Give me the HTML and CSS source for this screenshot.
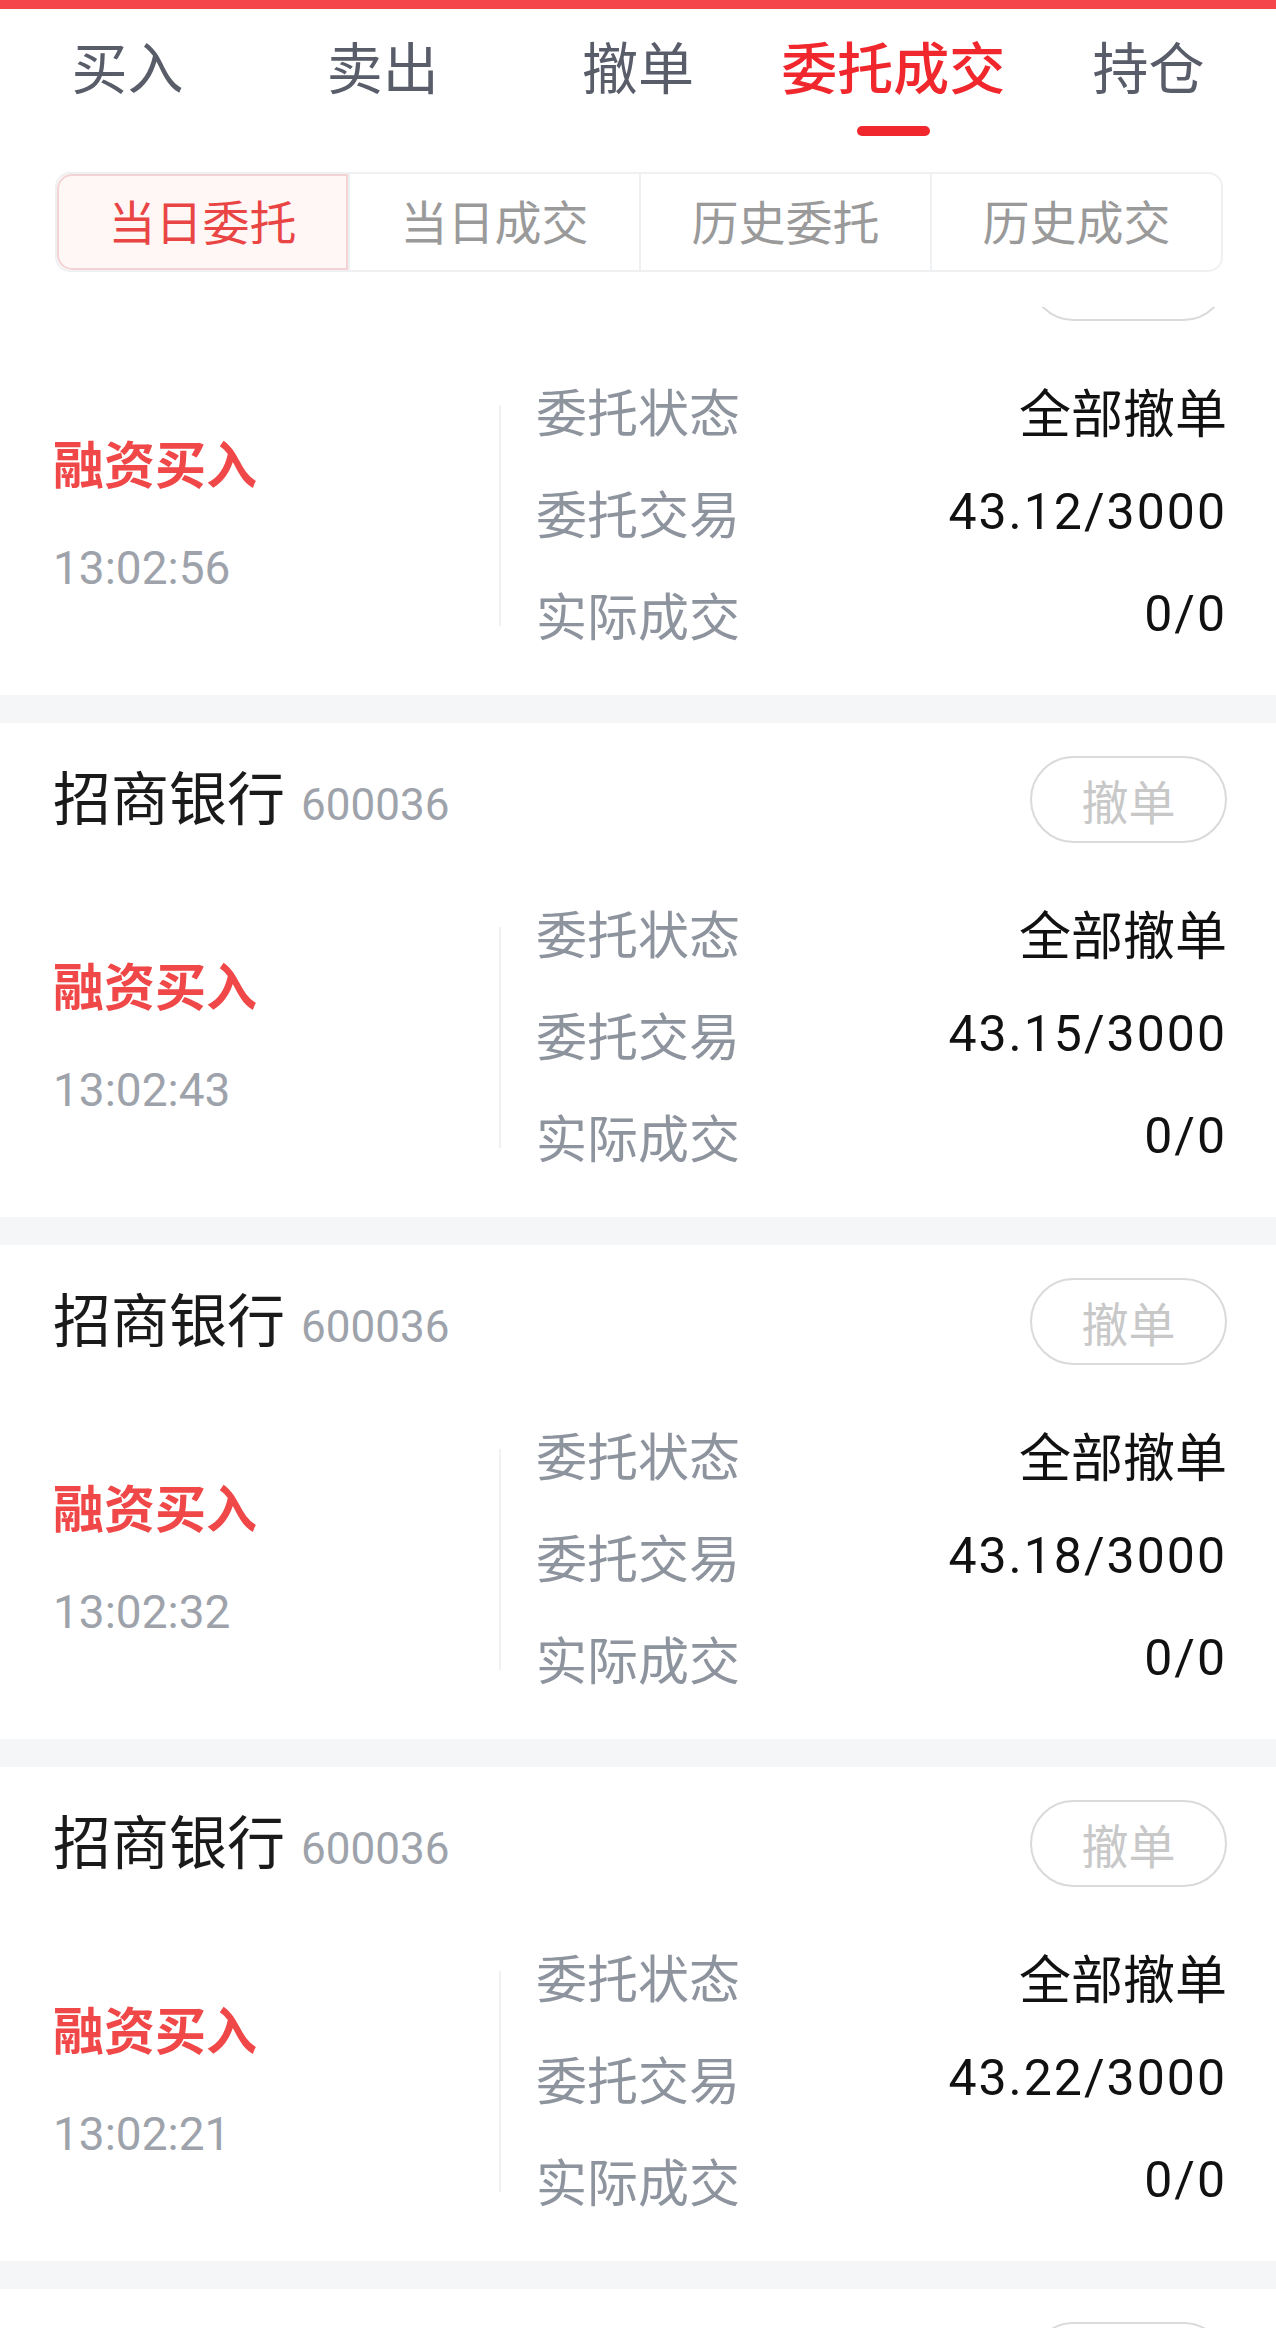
FILE: index.html
```html
<!DOCTYPE html>
<html lang="zh-CN">
<head>
  <meta charset="UTF-8">
  <meta name="viewport" content="width=device-width, initial-scale=1.0">
  <title>委托成交</title>
  <link rel="stylesheet" href="styles.css">
</head>
<body>
  <header class="top">
    <div class="top-bar"></div>
    <nav class="tabs">
      <div class="tab"><span>买入</span></div>
      <div class="tab"><span>卖出</span></div>
      <div class="tab"><span>撤单</span></div>
      <div class="tab active"><span>委托成交</span><i class="tab-line"></i></div>
      <div class="tab"><span>持仓</span></div>
    </nav>
    <div class="sub-tabs">
      <div class="sub-tab active">当日委托</div>
      <div class="sub-tab">当日成交</div>
      <div class="sub-tab">历史委托</div>
      <div class="sub-tab">历史成交</div>
    </div>
  </header>

  <div class="list">
    <div class="list-inner" id="orderList"></div>
  </div>

  <script>
    const orders = [
      { price: '43.12', time: '13:02:56' },
      { price: '43.15', time: '13:02:43' },
      { price: '43.18', time: '13:02:32' },
      { price: '43.22', time: '13:02:21' },
      { price: '43.25', time: '13:02:10' }
    ];

    const orderList = document.getElementById('orderList');

    function createCard(order) {
      const card = document.createElement('div');
      card.className = 'card';
      card.innerHTML = `
        <div class="card-head">
          <div class="stock"><span class="stock-name">招商银行</span><span class="stock-code">600036</span></div>
          <button class="cancel-btn">撤单</button>
        </div>
        <div class="card-body">
          <div class="side">
            <div class="side-type">融资买入</div>
            <div class="side-time">${order.time}</div>
          </div>
          <div class="divider"></div>
          <div class="detail">
            <div class="row"><span class="label">委托状态</span><span class="value">全部撤单</span></div>
            <div class="row"><span class="label">委托交易</span><span class="value num">${order.price}/3000</span></div>
            <div class="row"><span class="label">实际成交</span><span class="value num">0/0</span></div>
          </div>
        </div>`;
      return card;
    }

    orders.forEach(order => orderList.appendChild(createCard(order)));
  </script>
</body>
</html>
```

FILE: styles.css
```css
* {
  box-sizing: border-box;
}

body {
  margin: 0;
  padding: 0;
  background-color: #ffffff;
  font-family: "Noto Sans CJK SC", "Noto Sans", sans-serif;
  color: #1a1a1a;
}

.top {
  height: 307px;
  background-color: #ffffff;
}

.top-bar {
  height: 9px;
  background-color: #f5474b;
}

.tabs {
  display: grid;
  grid-template-columns: repeat(5, 1fr);
  padding-top: 18px;
}

.tab {
  display: flex;
  flex-direction: column;
  align-items: center;
  font-size: 56px;
  line-height: 76px;
  color: #585d69;
}

.tab.active {
  color: #f0282d;
  font-weight: 500;
}

.tab-line {
  display: block;
  width: 73px;
  height: 10px;
  margin-top: 23px;
  border-radius: 5px;
  background-color: #f0282d;
}

.sub-tabs {
  display: grid;
  grid-template-columns: repeat(4, 1fr);
  height: 100px;
  margin: 36px 53px 0 55px;
  border: 2px solid #eef0f2;
  border-radius: 15px;
  overflow: hidden;
}

.sub-tab {
  display: flex;
  align-items: center;
  justify-content: center;
  padding-bottom: 6px;
  font-size: 47px;
  color: #9a9a9a;
  border-left: 2px solid #eef0f2;
}

.sub-tab:first-child {
  border-left: none;
}

.sub-tab.active {
  color: #e94545;
  background-color: #fff6f6;
  box-shadow: inset 0 0 0 2px #f3d3d3;
  border-radius: 15px 0 0 15px;
}

.list {
  height: 2021px;
  overflow: hidden;
}

.list-inner {
  margin-top: -106px;
}

.card {
  padding: 33px 49px 27px 53px;
  border-bottom: 28px solid #f5f6f8;
}

.card-head {
  display: flex;
  align-items: center;
  justify-content: space-between;
  height: 87px;
}

.stock {
  display: flex;
  align-items: baseline;
  padding-bottom: 10px;
}

.stock-name {
  font-size: 58px;
  color: #1a1a1a;
}

.stock-code {
  margin-left: 16px;
  font-family: "Roboto", "Noto Sans", sans-serif;
  font-size: 44px;
  color: #9ea3ab;
}

.cancel-btn {
  width: 197px;
  height: 87px;
  padding: 0;
  border: 2px solid #dadada;
  border-radius: 44px;
  background-color: #ffffff;
  font-family: "Noto Sans CJK SC", sans-serif;
  font-size: 47px;
  color: #c8c8c8;
}

.card-body {
  display: flex;
  align-items: center;
  margin-top: 41px;
}

.side {
  width: 446px;
}

.side-type {
  font-size: 51px;
  line-height: 70px;
  font-weight: 700;
  color: #f04848;
}

.side-time {
  margin-top: 36px;
  font-family: "Roboto", "Noto Sans", sans-serif;
  font-size: 46px;
  line-height: 70px;
  color: #9ea3ab;
}

.divider {
  width: 2px;
  height: 221px;
  background-color: #f0f1f3;
}

.detail {
  flex: 1;
  padding-left: 35px;
}

.row {
  display: flex;
  align-items: center;
  justify-content: space-between;
  height: 102px;
  padding-bottom: 6px;
}

.label {
  font-size: 51px;
  color: #8e949e;
}

.value {
  font-size: 52px;
  color: #111111;
}

.value.num {
  font-family: "Roboto", "Noto Sans", sans-serif;
  font-size: 50px;
  letter-spacing: 2px;
}
```
